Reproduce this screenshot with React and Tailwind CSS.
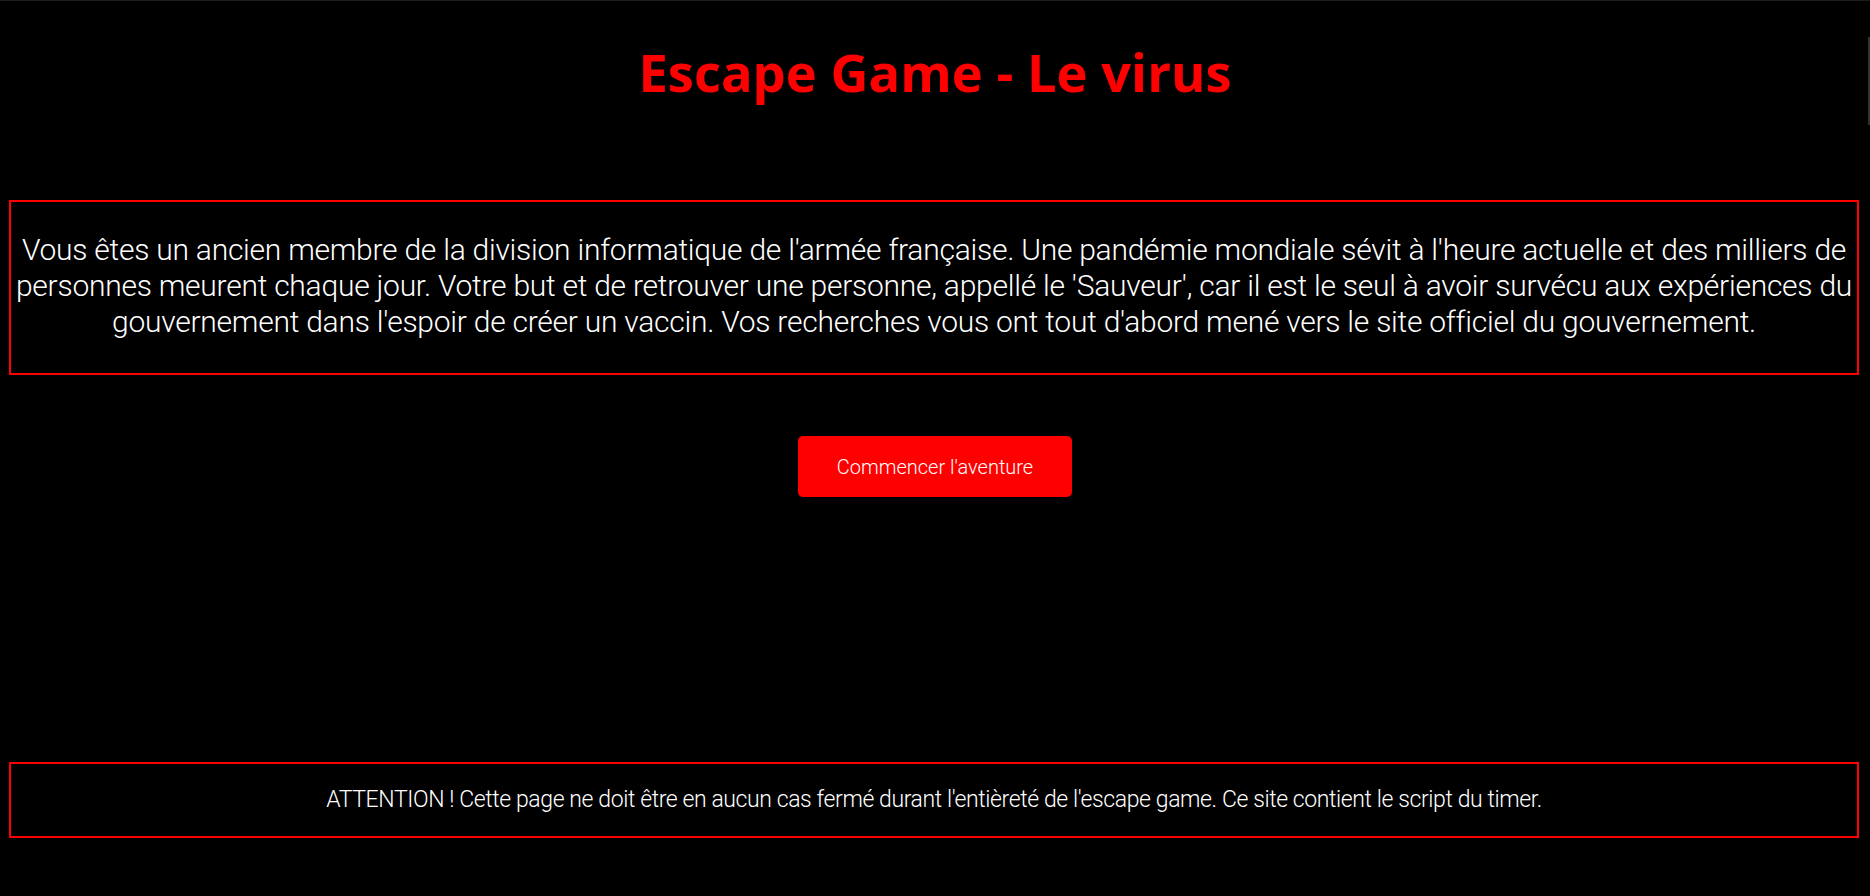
export default function App() {
  return (
    <div className="relative min-h-[896px] bg-black border-t border-[#1c1c1c] font-['Roboto',sans-serif] font-light text-white">
      <div className="absolute right-0 top-[36px] h-[88px] w-[2px] bg-[#333333]" />

      <h1 className="pt-[32px] text-center font-['Open_Sans',sans-serif] text-[52.5px] font-bold leading-[78px] text-[#ff0000]">
        Escape Game - Le virus
      </h1>

      <div className="mx-[9px] mr-[11px] mt-[89px] border-2 border-[#ff0000] px-[3px] pt-[30px] pb-[33px] text-center text-[30px] leading-[36px] tracking-[-0.25px]">
        Vous êtes un ancien membre de la division informatique de l'armée française. Une pandémie mondiale sévit à l'heure
        actuelle et des milliers de personnes meurent chaque jour. Votre but et de retrouver une personne, appellé le
        'Sauveur', car il est le seul à avoir survécu aux expériences du gouvernement dans l'espoir de créer un vaccin. Vos
        recherches vous ont tout d'abord mené vers le site officiel du gouvernement.
      </div>

      <div className="mt-[61px] flex justify-center">
        <button className="h-[61px] w-[274px] rounded-[5px] bg-[#ff0000] text-[20px] font-light text-white">
          Commencer l'aventure
        </button>
      </div>

      <div className="mx-[9px] mr-[11px] mt-[265px] border-2 border-[#ff0000] pt-[22px] pb-[22px] text-center text-[23px] leading-[28px] tracking-[-0.4px]">
        ATTENTION ! Cette page ne doit être en aucun cas fermé durant l'entièreté de l'escape game. Ce site contient le
        script du timer.
      </div>
    </div>
  )
}
